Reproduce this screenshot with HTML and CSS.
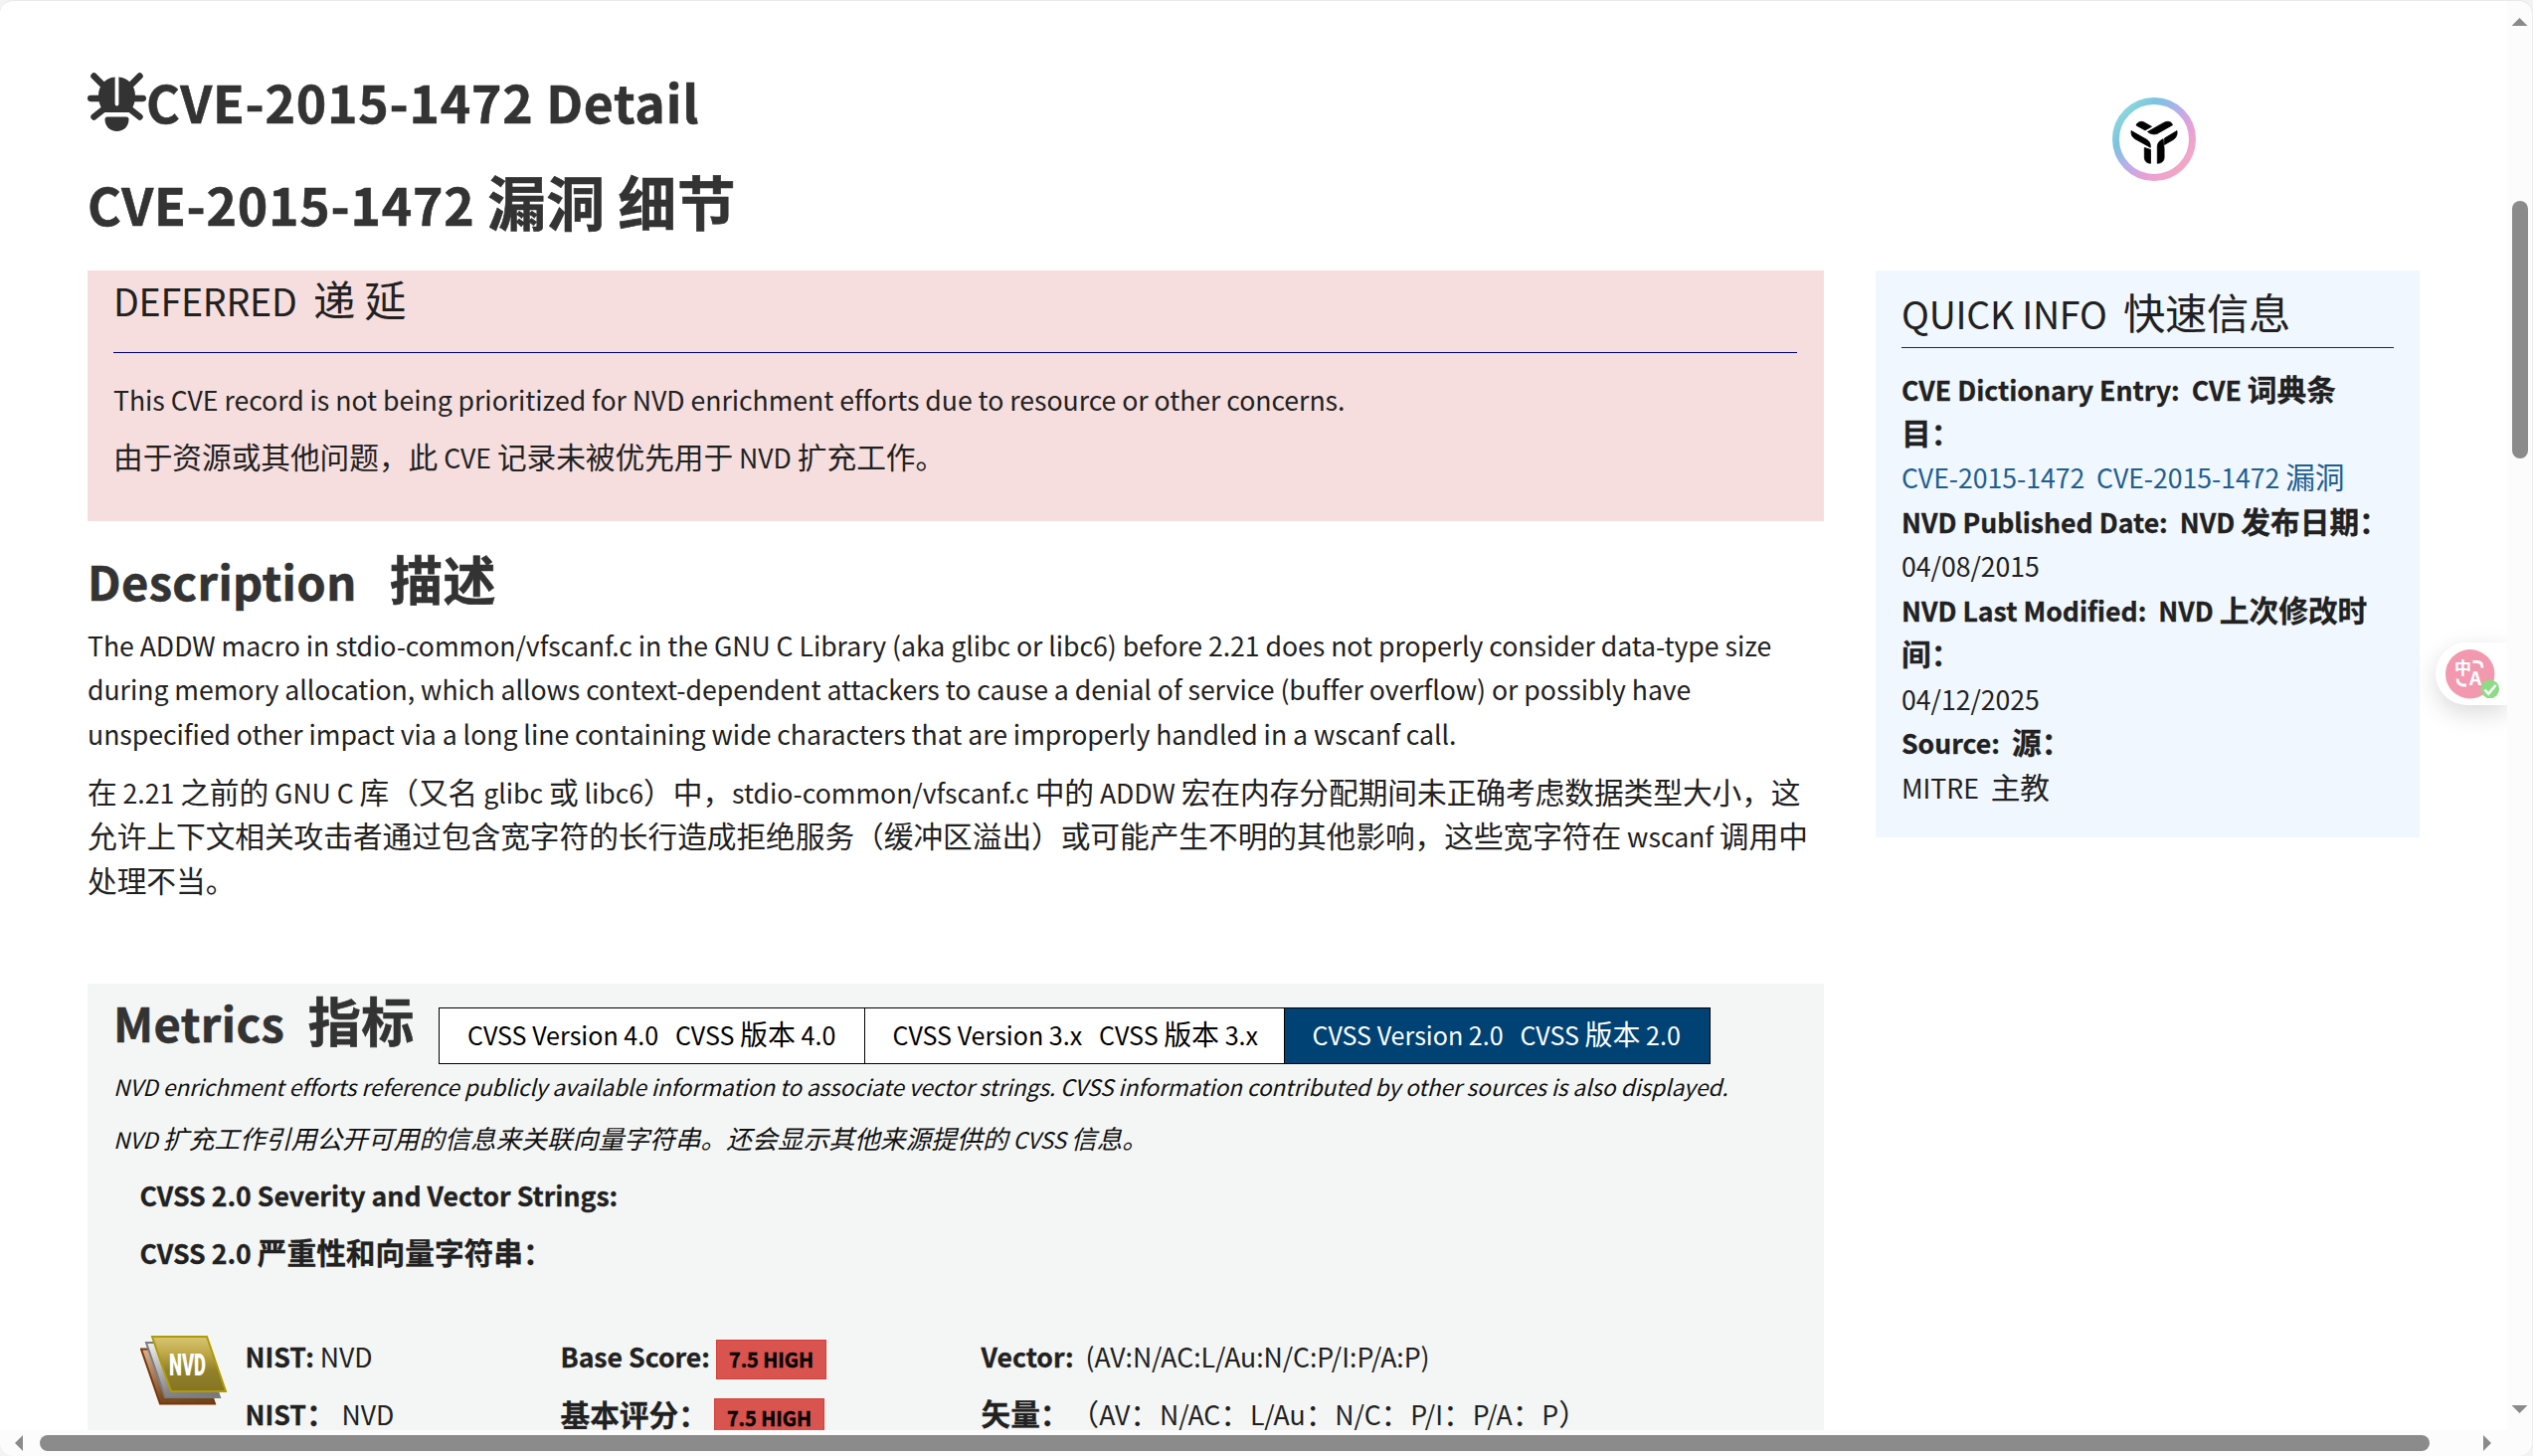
FILE: index.html
```html
<!DOCTYPE html>
<html lang="zh-CN">
<head>
<meta charset="utf-8">
<title>CVE-2015-1472 Detail</title>
<link rel="stylesheet" href="styles.css">
</head>
<body>
<div class="window">
  <div class="page">
    <main class="main">
      <h1 class="title"><svg class="bug" viewBox="0 0 59 59" aria-hidden="true"><path d="M27.6 4.500C18 5 11 13 11 23c0 7 2 12 6 17h25c4-5 6-10 6-17 0-10-7-18-16.600-18.500V31.500a1.900 1.900 0 0 1-3.800 0z"/><path class="leg" d="M6.500 3.500l10 10M52.500 3.500l-10 10M3.200 26H15M44 26h11.800M16 37l-9.500 7.500M43 37l9.500 7.500"/><path d="M20 44.500h19q2.500 0 2.500 2.500c0 7-5 12-12 12s-12-5-12-12q0-2.500 2.500-2.500z"/></svg>CVE-2015-1472 Detail</h1>
      <h1 class="title title-cn">CVE-2015-1472 <span class="z">漏洞</span> <span class="z">细节</span></h1>

      <section class="alert">
        <h2 class="sub">DEFERRED&nbsp; <span class="z">递 延</span></h2>
        <hr>
        <p>This CVE record is not being prioritized for NVD enrichment efforts due to resource or other concerns.</p>
        <p><span class="z">由于资源或其他问题，此</span> CVE <span class="z">记录未被优先用于</span> NVD <span class="z">扩充工作。</span></p>
      </section>

      <h2 class="heading">Description&nbsp;&nbsp; <span class="z">描述</span></h2>
      <div class="desc">
        <p>The ADDW macro in stdio-common/vfscanf.c in the GNU C Library (aka glibc or libc6) before 2.21 does not properly consider data-type size<br>during memory allocation, which allows context-dependent attackers to cause a denial of service (buffer overflow) or possibly have<br>unspecified other impact via a long line containing wide characters that are improperly handled in a wscanf call.</p>
        <p><span class="z">在</span> 2.21 <span class="z">之前的</span> GNU C <span class="z">库（又名</span> glibc <span class="z">或</span> libc6<span class="z">）中，</span>stdio-common/vfscanf.c <span class="z">中的</span> ADDW <span class="z">宏在内存分配期间未正确考虑数据类型大小，这</span><br><span class="z">允许上下文相关攻击者通过包含宽字符的长行造成拒绝服务（缓冲区溢出）或可能产生不明的其他影响，这些宽字符在</span> wscanf <span class="z">调用中</span><br><span class="z">处理不当。</span></p>
      </div>

      <section class="metrics">
        <div class="metrics-head">
          <h2 class="heading">Metrics&nbsp;<span class="z"> 指标</span></h2>
          <div class="tabs">
            <span class="tab">CVSS Version 4.0&nbsp; &nbsp;CVSS <span class="z">版本</span> 4.0</span>
            <span class="tab">CVSS Version 3.x&nbsp; &nbsp;CVSS <span class="z">版本</span> 3.x</span>
            <span class="tab active">CVSS Version 2.0&nbsp; &nbsp;CVSS <span class="z">版本</span> 2.0</span>
          </div>
        </div>
        <p class="note">NVD enrichment efforts reference publicly available information to associate vector strings. CVSS information contributed by other sources is also displayed.</p>
        <p class="note note-cn">NVD <span class="z">扩充工作引用公开可用的信息来关联向量字符串。还会显示其他来源提供的</span> CVSS <span class="z">信息。</span></p>
        <div class="strings">
          <p><b>CVSS 2.0 Severity and Vector Strings:</b></p>
          <p><b>CVSS 2.0 <span class="z">严重性和向量字符串：</span></b></p>
          <div class="scores">
            <svg class="nvd" viewBox="0 0 88 70" role="img">
              <defs>
                <linearGradient id="gold" x1="0" y1="0" x2="0" y2="1"><stop offset="0" stop-color="#d8c672"/><stop offset=".3" stop-color="#bfa848"/><stop offset=".62" stop-color="#92802a"/><stop offset="1" stop-color="#857522"/></linearGradient>
                <linearGradient id="silver" x1="0" y1="0" x2="1" y2="1"><stop offset="0" stop-color="#f4f4f4"/><stop offset=".6" stop-color="#85858a"/><stop offset="1" stop-color="#777"/></linearGradient>
                <linearGradient id="bronze" x1="0" y1="0" x2="1" y2="1"><stop offset="0" stop-color="#d9b896"/><stop offset=".6" stop-color="#7a4a20"/><stop offset="1" stop-color="#6a4418"/></linearGradient>
              </defs>
              <path d="M1 13.500H56L75 68.500H20Z" fill="url(#bronze)" stroke="#7a3508" stroke-width="2"/>
              <path d="M6 7H61L80 62H25Z" fill="url(#silver)" stroke="#7b7c80" stroke-width="2"/>
              <path d="M12 1H67L86 56H31Z" fill="url(#gold)" stroke="#b09a08" stroke-width="2"/>
              <text x="29" y="40" textLength="37" lengthAdjust="spacingAndGlyphs">NVD</text>
            </svg>
            <div class="cell"><p><b>NIST:</b> NVD</p><p><b>NIST<span class="z">：</span></b> NVD</p></div>
            <div class="cell"><p><b>Base Score:</b> <span class="badge">7.5 HIGH</span></p><p><b class="z">基本评分：</b> <span class="badge">7.5 HIGH</span></p></div>
            <div class="cell"><p><b>Vector:</b>&nbsp; (AV:N/AC:L/Au:N/C:P/I:P/A:P)</p><p><b class="z">矢量：</b><span class="z">（</span>AV<span class="z">：</span>N/AC<span class="z">：</span>L/Au<span class="z">：</span>N/C<span class="z">：</span>P/I<span class="z">：</span>P/A<span class="z">：</span>P<span class="z">）</span></p></div>
          </div>
        </div>
      </section>
    </main>

    <aside class="side">
      <svg class="logo" viewBox="0 0 84 84" aria-hidden="true">
        <defs><linearGradient id="ring" x1=".1" y1=".15" x2=".85" y2=".85"><stop offset="0" stop-color="#8ad6dc"/><stop offset=".22" stop-color="#7cc3e0"/><stop offset=".5" stop-color="#b9aeea"/><stop offset=".75" stop-color="#e7a0d6"/><stop offset="1" stop-color="#f2a6c6"/></linearGradient></defs>
        <circle cx="42" cy="42" r="38.500" fill="#fff" stroke="url(#ring)" stroke-width="7"/>
        <g stroke="#000" stroke-width=".8">
        <path d="M24 28c1.500-3.500 5-4.500 8-3l7.500 4.300-6.500 3.700z"/>
        <path d="M35.500 34.500l17-9.500c4-1.500 7-.5 8 2.700L45 36.500c-3.500 1-7 .2-9.500-2z"/>
        <path d="M19 33.500l15.500 8.800c3 2 4 4 3.800 8L22.500 41.500c-2.500-1.800-3.800-4.500-3.500-8z"/>
        <path d="M65 33.500L52.500 41v6.500l9-5.200c3-2 4-5 3.500-8.800z"/>
        <path d="M32.300 50.500l6.200 2v13.800c-4-.3-6.200-2.300-6.200-6.500z"/>
        <path d="M45.300 66.300V49c.3-3.500 2-5.200 5.800-7.300l1 10V60c0 4-2.500 6-6.800 6.300z"/>
        </g>
      </svg>
      <section class="quick">
        <h2 class="sub">QUICK INFO&nbsp; <span class="z">快速信息</span></h2>
        <div class="info">
          <b>CVE Dictionary Entry:&nbsp; CVE <span class="z">词典条</span></b><br><b class="z">目：</b><br>
          <a>CVE-2015-1472&nbsp; CVE-2015-1472 <span class="z">漏洞</span></a><br>
          <b>NVD Published Date:&nbsp; NVD <span class="z">发布日期：</span></b><br>
          04/08/2015<br>
          <b>NVD Last Modified:&nbsp; NVD <span class="z">上次修改时</span></b><br><b class="z">间：</b><br>
          04/12/2025<br>
          <b>Source:&nbsp; <span class="z">源：</span></b><br>
          MITRE&nbsp; <span class="z">主教</span>
        </div>
      </section>
    </aside>

    <div class="translate">
      <svg viewBox="0 0 52 50" aria-hidden="true">
        <circle cx="24.700" cy="24.700" r="24.700" fill="#f299af"/>
        <text x="9" y="25" font-size="17">中</text>
        <text x="24" y="36" font-size="19">A</text>
        <path d="M27.500 12.500h4.500q5 0 5 6M12 29.500q0 6.500 7 6.500h2" fill="none" stroke="#fff" stroke-width="2.800"/>
        <circle cx="44.800" cy="39.800" r="9.300" fill="#8edb86"/>
        <path d="M39.500 40.500l3.700 4L50.500 36" fill="none" stroke="#fff" stroke-width="2.500"/>
      </svg>
    </div>
  </div>

  <div class="vbar"><i class="arrow up"></i><i class="vthumb"></i><i class="arrow down"></i></div>
  <div class="hbar"><i class="arrow left"></i><i class="hthumb"></i><i class="arrow right"></i></div>
</div>
</body>
</html>
```
FILE: styles.css
```css
* { box-sizing: border-box; }

html, body { margin: 0; height: 100%; }

body {
  background: #f3f3f3;
  color: #212121;
  font-family: "Noto Sans CJK SC", "Noto Sans", sans-serif;
  font-size: 26.63px;
  line-height: 44.6px;
  letter-spacing: -.03px;
  overflow: hidden;
}

h1, h2, p { margin: 0; white-space: nowrap; }
b { letter-spacing: 0; -webkit-text-stroke: .3px currentColor; }

/* Chinese runs are set larger than the Latin text beside them */
.z { font-size: 1.115em; line-height: 0; }

.window {
  display: grid;
  grid-template-columns: 2521px 1fr;
  grid-template-rows: 1437px 1fr;
  width: 2547px;
  height: 1464px;
  border-top: 1px solid #e9e9e9;
  border-right: 1px solid #ececec;
  border-radius: 14px;
  background: #fcfcfc;
  overflow: hidden;
}

.page {
  position: relative;
  display: flex;
  gap: 52px;
  padding: 60px 0 0 88px;
  background: #fff;
  overflow: hidden;
}

.main { width: 1746px; flex: none; }

.title {
  display: flex;
  height: 82px;
  font-size: 51.7px;
  line-height: 82px;
  letter-spacing: .78px;
  color: #333;
  -webkit-text-stroke: .6px #333;
}
.title-cn { display: block; margin-top: 21px; }
.title .z { font-size: 1.135em; }
.bug { width: 59px; height: 59px; margin-top: 12px; fill: #333; }
.leg { fill: none; stroke: #333; stroke-width: 6.5; stroke-linecap: round; }

.alert {
  height: 252px;
  margin-top: 26px;
  padding: 5px 27px 0 26px;
  background: #f6dede;
}
.sub { font-size: 37.6px; font-weight: 400; line-height: 50px; letter-spacing: -.25px; }
.sub .z { font-size: 1.125em; }
.alert hr { height: 1px; margin: 27px 0 25px; border: 0; background: #000080; }
p + p { margin-top: 14px; }
.alert p + p { margin-top: 13.4px; }

.heading { font-size: 47px; line-height: 66px; letter-spacing: .4px; color: #333; -webkit-text-stroke: .6px #333; }
.heading .z { font-size: 1.13em; }
.main > .heading { margin-top: 26.6px; }
.desc { margin-top: 10.2px; }

.metrics {
  height: 460px;
  margin-top: 80.5px;
  padding: 6px 0 0 26px;
  background: #f4f6f5;
}
.metrics-head { display: flex; height: 75px; }
.metrics-head .heading { width: 327px; }
.tabs {
  display: flex;
  width: 1279px;
  height: 57px;
  margin-top: 18px;
  border: 1px solid #000;
  background: #fff;
  color: #000;
  font-size: 25.07px;
  line-height: 52px;
  letter-spacing: 0;
}
.tab { width: 427.5px; padding-left: 28px; border-right: 1px solid #000; white-space: nowrap; }
.tab + .tab { width: 422px; }
.tab.active { flex: 1; border: 0; background: #004274; color: #fff; }

.note { margin: 3.8px 0 0; font-size: 22.65px; line-height: 38px; letter-spacing: -.08px; font-style: italic; color: #111; }
.note-cn { margin-top: 15px; }
.note .z { font-size: 1.141em; }

.strings { padding: 15px 0 0 26.500px; }
.scores { display: grid; grid-template-columns: 106px 317px 423px 1fr; margin-top: 59.500px; text-spacing-trim: space-all; }
.nvd { width: 88px; height: 70px; margin-top: .5px; }
.nvd text { fill: #fff; font-family: "Roboto", sans-serif; font-size: 32px; font-weight: 900; }
.cell p + p { margin-top: 13.4px; }
.badge {
  display: inline-block;
  height: 40px;
  padding: 0 12px;
  border: 1px solid #d43f3a;
  background: #d9534f;
  color: #000;
  font-size: 19.900px;
  font-weight: 700;
  line-height: 37px;
  -webkit-text-stroke: .4px #000;
}

.side { width: 547px; flex: none; }
.logo { display: block; width: 84px; height: 84px; margin: 37px 0 90px 238px; }
.quick { height: 570px; padding: 17.500px 26px; background: #f0f7fe; }
.quick .sub { height: 60px; border-bottom: 1px solid #036; }
.info { margin-top: 20px; line-height: 44.45px; white-space: nowrap; }
.info a { color: #205e90; }

.translate {
  position: absolute;
  right: 0;
  top: 645px;
  width: 72px;
  height: 63px;
  padding: 7px 0 0 9px;
  border-radius: 32px 0 0 32px;
  background: #fff;
  box-shadow: 0 8px 24px rgba(0, 0, 0, .15);
}
.translate svg { display: block; width: 54px; height: 50px; overflow: visible; }
.translate text { fill: #fff; font-weight: 700; }

.vbar, .hbar { display: flex; align-items: center; }
.vbar { flex-direction: column; padding-top: 17px; }
.hbar { grid-column: 1 / -1; padding-left: 15px; }
.vthumb { width: 16px; height: 259px; margin: 176px 0 952px; border-radius: 8px; background: #8b8b8b; }
.hthumb { width: 2403px; height: 16px; margin: 0 54px 0 17px; border-radius: 8px; background: #8b8b8b; }
.arrow { width: 16px; height: 8px; background: #8b8b8b; }
.up { clip-path: polygon(0 100%, 50% 0, 100% 100%); }
.down { clip-path: polygon(0 0, 100% 0, 50% 100%); }
.left, .right { width: 8px; height: 16px; }
.left { clip-path: polygon(100% 0, 100% 100%, 0 50%); }
.right { clip-path: polygon(0 0, 100% 50%, 0 100%); }
```
